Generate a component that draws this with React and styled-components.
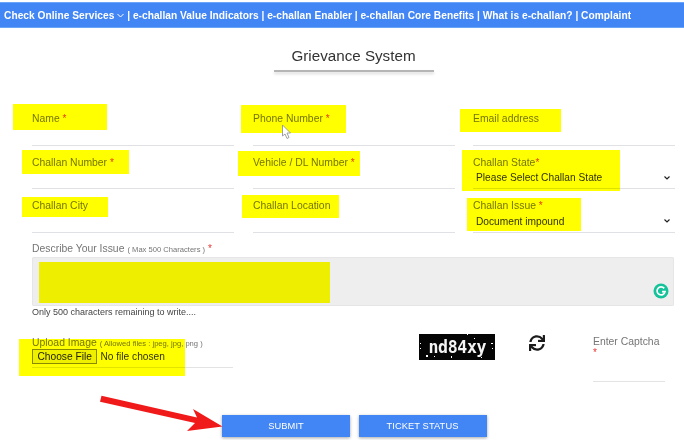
import React from 'react';
import styled, { createGlobalStyle } from 'styled-components';
import { FaSync } from 'react-icons/fa';

const GlobalStyle = createGlobalStyle`
  html, body {
    margin: 0;
    padding: 0;
    background: #fff;
    font-family: "Liberation Sans", Arial, sans-serif;
  }
`;

const Page = styled.div`
  position: relative;
  width: 684px;
  height: 440px;
  overflow: hidden;
  background: #fff;
`;

const Nav = styled.nav`
  display: flex;
  align-items: center;
  gap: 2.8px;
  height: 26px;
  margin-top: 2px;
  padding-left: 4px;
  box-sizing: border-box;
  background: #4285f4;
  border-top: 1px solid #6aa5f8;
  border-bottom: 1px solid #6aa5f8;
  color: #fff;
  font-size: 10.2px;
  font-weight: 700;
  letter-spacing: 0.025px;
  white-space: nowrap;
`;

const NavLink = styled.a`
  display: inline-flex;
  align-items: center;
  gap: 3px;
  color: #fff;
  text-decoration: none;
`;

const Main = styled.main`
  padding: 0 9px 0 32px;
`;

const Title = styled.h2`
  margin: 18px 0 0;
  font-size: 15.2px;
  line-height: 20px;
  font-weight: 400;
  color: #333;
  text-align: center;
`;

const TitleRule = styled.div`
  width: 160px;
  height: 2px;
  margin: 4px auto 0;
  background: #b5b5b5;
  box-shadow: 0 2px 3px rgba(0, 0, 0, 0.16);
`;

const FieldGrid = styled.div`
  display: grid;
  grid-template-columns: 221px 220px 202px;
  grid-auto-rows: 43.5px;
  margin-top: 30px;
`;

const Field = styled.div`
  display: flex;
  flex-direction: column;
  width: 201.5px;
  box-sizing: border-box;
  padding-top: 11px;
  border-bottom: 1px solid #dfe1e5;
`;

const Label = styled.label`
  display: block;
  font-size: 10.4px;
  line-height: 12px;
  color: #757575;
`;

const Star = styled.span`
  display: ${(p) => (p.$block ? 'block' : 'inline')};
  color: #e53935;
  font-size: 10px;
  line-height: 10px;
`;

const Input = styled.input`
  flex: 1;
  min-height: 0;
  border: none;
  outline: none;
  background: transparent;
`;

const SelectWrap = styled.div`
  position: relative;
`;

const Select = styled.select`
  display: block;
  width: 100%;
  height: 18px;
  padding: 0 0 0 3px;
  border: none;
  outline: none;
  appearance: none;
  background: transparent;
  font-family: inherit;
  font-size: 10.2px;
  color: #333;
`;

const Chevron = styled.svg`
  position: absolute;
  right: 5px;
  top: 7px;
  width: 6px;
  height: 4px;
  fill: none;
  stroke: #222;
  stroke-width: 1.2;
`;

const Describe = styled.section`
  margin-top: 8px;
`;

const DescribeLabel = styled(Label)`
  line-height: 16px;
`;

const Small = styled.span`
  font-size: 7.6px;
  line-height: 10px;
  margin-left: 3px;
`;

const TextBox = styled.div`
  position: relative;
  height: 49px;
  margin-right: 1px;
  border-radius: 2px;
  background: #eeeeee;
  box-shadow: inset 0 0 0 1px #e6e6e6;
`;

const TextArea = styled.textarea`
  display: block;
  width: 100%;
  height: 100%;
  box-sizing: border-box;
  border: none;
  outline: none;
  resize: none;
  background: transparent;
`;

const GrammarlyBadge = styled.svg`
  position: absolute;
  right: 5px;
  bottom: 7px;
  width: 16px;
  height: 16px;
`;

const Counter = styled.p`
  margin: 0;
  font-size: 9px;
  line-height: 13px;
  color: #444;
`;

const UploadRow = styled.div`
  display: flex;
  align-items: flex-start;
  margin-top: 16px;
`;

const UploadField = styled.div`
  width: 201px;
  height: 33px;
  box-sizing: border-box;
  padding-top: 1px;
  border-bottom: 1px solid #e3e3e3;
`;

const UploadLabel = styled(Label)`
  line-height: 13px;
`;

const FileInput = styled.input`
  display: block;
  width: 190px;
  font-family: inherit;
  font-size: 10.2px;
  color: #333;
  &::file-selector-button {
    height: 15px;
    margin-right: 3px;
    padding: 0 4.5px;
    border: 1px solid #8a8a8a;
    border-radius: 0;
    background: #efefef;
    color: #222;
    font: inherit;
  }
`;

const Captcha = styled.div`
  position: relative;
  display: flex;
  align-items: center;
  justify-content: center;
  width: 76px;
  height: 26px;
  margin: -1px 0 0 186px;
  overflow: hidden;
  background: #050505;
  color: #f4f4f4;
  font-family: "DejaVu Sans Mono", "Liberation Mono", monospace;
  font-size: 18px;
  font-weight: 700;
`;

const CaptchaText = styled.span`
  display: inline-block;
  transform: scale(0.92, 1);
  letter-spacing: -0.4px;
`;

const Specks = styled.svg`
  position: absolute;
  inset: 0;
  width: 100%;
  height: 100%;
`;

const RefreshButton = styled.button`
  display: flex;
  width: 16px;
  height: 16px;
  margin: 0 0 0 34px;
  padding: 0;
  border: none;
  background: none;
  color: #1c1c1c;
  font-size: 16px;
`;

const CaptchaField = styled.div`
  width: 72px;
  height: 47px;
  margin-left: 48px;
  box-sizing: border-box;
  padding-top: 1px;
  border-bottom: 1px solid #e3e3e3;
`;

const Actions = styled.div`
  display: flex;
  gap: 8.5px;
  margin: 33px 0 0 190px;
`;

const Button = styled.button`
  width: 128px;
  height: 22px;
  padding: 0;
  border: none;
  background: #4285f4;
  box-shadow: 0 1px 3px rgba(0, 0, 0, 0.35);
  color: #fff;
  font-family: inherit;
  font-size: 9.3px;
  font-weight: 400;
  letter-spacing: 0.1px;
`;

/* marker strokes someone drew over the screenshot */
const Marker = styled.div`
  position: absolute;
  left: ${(p) => p.$x}px;
  top: ${(p) => p.$y}px;
  width: ${(p) => p.$w}px;
  height: ${(p) => p.$h}px;
  background: #ffff00;
  mix-blend-mode: multiply;
  pointer-events: none;
`;

const Annotation = styled.svg`
  position: absolute;
  left: 0;
  top: 0;
  width: 684px;
  height: 440px;
  pointer-events: none;
`;

const markers = [
  { x: 13, y: 104, w: 94, h: 26 },
  { x: 240.5, y: 105, w: 105.5, h: 28 },
  { x: 460, y: 109, w: 101, h: 23 },
  { x: 21.5, y: 150, w: 107.5, h: 24 },
  { x: 238, y: 150.5, w: 122, h: 25.5 },
  { x: 462, y: 150, w: 158, h: 40.5 },
  { x: 21.5, y: 196.5, w: 86.5, h: 20 },
  { x: 242, y: 194.5, w: 97, h: 23 },
  { x: 467, y: 198, w: 114, h: 33 },
  { x: 39, y: 262, w: 291, h: 41 },
  { x: 19, y: 339, w: 166, h: 37 },
];

const SelectField = ({ value, children }) => (
  <SelectWrap>
    <Select defaultValue={value}>{children}</Select>
    <Chevron viewBox="0 0 6 4">
      <path d="M0.5 0.5 L3 3 L5.5 0.5" />
    </Chevron>
  </SelectWrap>
);

const App = () => {
  return (
    <Page>
      <GlobalStyle />
      <Nav>
        <NavLink href="#">
          Check Online Services
          <svg width="7" height="5" viewBox="0 0 7 5" fill="none" stroke="#fff" strokeWidth="1">
            <path d="M0.5 1 L3.5 4 L6.5 1" />
          </svg>
        </NavLink>
        <span>|</span>
        <NavLink href="#">e-challan Value Indicators</NavLink>
        <span>|</span>
        <NavLink href="#">e-challan Enabler</NavLink>
        <span>|</span>
        <NavLink href="#">e-challan Core Benefits</NavLink>
        <span>|</span>
        <NavLink href="#">What is e-challan?</NavLink>
        <span>|</span>
        <NavLink href="#">Complaint</NavLink>
      </Nav>

      <Main>
        <Title>Grievance System</Title>
        <TitleRule />

        <FieldGrid>
          <Field>
            <Label>Name <Star>*</Star></Label>
            <Input type="text" />
          </Field>
          <Field>
            <Label>Phone Number <Star>*</Star></Label>
            <Input type="text" />
          </Field>
          <Field>
            <Label>Email address</Label>
            <Input type="text" />
          </Field>
          <Field>
            <Label>Challan Number <Star>*</Star></Label>
            <Input type="text" />
          </Field>
          <Field>
            <Label>Vehicle / DL Number <Star>*</Star></Label>
            <Input type="text" />
          </Field>
          <Field>
            <Label>Challan State<Star>*</Star></Label>
            <SelectField value="">
              <option value="">Please Select Challan State</option>
            </SelectField>
          </Field>
          <Field>
            <Label>Challan City</Label>
            <Input type="text" />
          </Field>
          <Field>
            <Label>Challan Location</Label>
            <Input type="text" />
          </Field>
          <Field>
            <Label>Challan Issue <Star>*</Star></Label>
            <SelectField value="impound">
              <option value="impound">Document impound</option>
            </SelectField>
          </Field>
        </FieldGrid>

        <Describe>
          <DescribeLabel>
            Describe Your Issue<Small>( Max 500 Characters )</Small> <Star>*</Star>
          </DescribeLabel>
          <TextBox>
            <TextArea />
            <GrammarlyBadge viewBox="0 0 16 16">
              <circle cx="8" cy="8" r="7.5" fill="#15c39a" />
              <path d="M11.2 5.4 A4 4 0 1 0 12 8.6 H9" fill="none" stroke="#fff" strokeWidth="1.7" />
            </GrammarlyBadge>
          </TextBox>
          <Counter>Only 500 characters remaining to write....</Counter>
        </Describe>

        <UploadRow>
          <UploadField>
            <UploadLabel>
              Upload Image<Small>( Allowed files : jpeg, jpg, png )</Small>
            </UploadLabel>
            <FileInput type="file" />
          </UploadField>
          <Captcha>
            <Specks viewBox="0 0 76 26">
              <g fill="#fff">
                <rect x="1" y="9" width="1" height="1" />
                <rect x="1" y="14" width="1" height="1" />
                <rect x="7" y="21" width="2" height="2" />
                <rect x="15" y="22" width="1" height="1" />
                <rect x="32" y="22" width="1" height="2" />
                <rect x="48" y="0" width="1" height="1" />
                <rect x="55" y="4" width="1" height="1" />
                <rect x="72" y="9" width="2" height="1" />
                <rect x="73" y="14" width="1" height="1" />
                <rect x="62" y="23" width="1" height="1" />
              </g>
            </Specks>
            <CaptchaText>nd84xy</CaptchaText>
          </Captcha>
          <RefreshButton type="button" aria-label="Refresh captcha">
            <FaSync />
          </RefreshButton>
          <CaptchaField>
            <Label>Enter Captcha</Label>
            <Star $block>*</Star>
          </CaptchaField>
        </UploadRow>

        <Actions>
          <Button type="button">SUBMIT</Button>
          <Button type="button">TICKET STATUS</Button>
        </Actions>
      </Main>

      {markers.map((m) => (
        <Marker key={`${m.x}-${m.y}`} $x={m.x} $y={m.y} $w={m.w} $h={m.h} />
      ))}

      <Annotation viewBox="0 0 684 440">
        <polygon
          points="101.5,395.7 197,417.5 193,409 222.5,426.5 187,431 195,423 100,401.7"
          fill="#f01a1a"
        />
        <path
          d="M282.5 125 L282.5 136 L285 134 L287 138.5 L289 137.5 L287 133 L290.5 133 Z"
          fill="#fff"
          stroke="#8a8a8a"
          strokeWidth="0.8"
        />
      </Annotation>
    </Page>
  );
};

export default App;
